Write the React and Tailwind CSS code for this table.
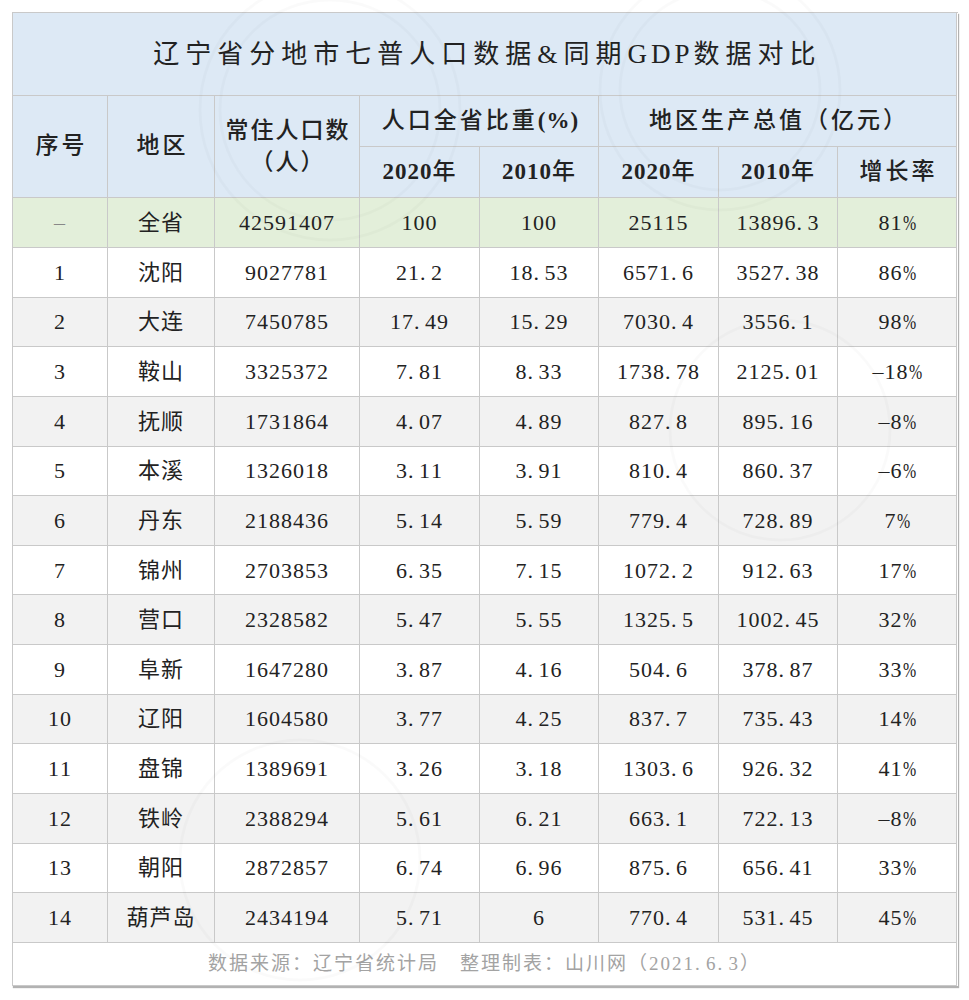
import React from "react";

const rows = [
  ["1", "沈阳", "9027781", "21.2", "18.53", "6571.6", "3527.38", "86%"],
  ["2", "大连", "7450785", "17.49", "15.29", "7030.4", "3556.1", "98%"],
  ["3", "鞍山", "3325372", "7.81", "8.33", "1738.78", "2125.01", "-18%"],
  ["4", "抚顺", "1731864", "4.07", "4.89", "827.8", "895.16", "-8%"],
  ["5", "本溪", "1326018", "3.11", "3.91", "810.4", "860.37", "-6%"],
  ["6", "丹东", "2188436", "5.14", "5.59", "779.4", "728.89", "7%"],
  ["7", "锦州", "2703853", "6.35", "7.15", "1072.2", "912.63", "17%"],
  ["8", "营口", "2328582", "5.47", "5.55", "1325.5", "1002.45", "32%"],
  ["9", "阜新", "1647280", "3.87", "4.16", "504.6", "378.87", "33%"],
  ["10", "辽阳", "1604580", "3.77", "4.25", "837.7", "735.43", "14%"],
  ["11", "盘锦", "1389691", "3.26", "3.18", "1303.6", "926.32", "41%"],
  ["12", "铁岭", "2388294", "5.61", "6.21", "663.1", "722.13", "-8%"],
  ["13", "朝阳", "2872857", "6.74", "6.96", "875.6", "656.41", "33%"],
  ["14", "葫芦岛", "2434194", "5.71", "6", "770.4", "531.45", "45%"],
];

const total = ["-", "全省", "42591407", "100", "100", "25115", "13896.3", "81%"];

function Fmt({ s }) {
  const out = [];
  [...s].forEach((c, i) => {
    if (c === ".") {
      out.push(
        <span key={i} className="inline-block w-[11px] text-left">.</span>
      );
    } else if (c === "%") {
      out.push(
        <span key={i} className="inline-block w-[13px] text-left">
          <span className="inline-block origin-left scale-x-[0.72]">%</span>
        </span>
      );
    } else if (c === "-") {
      out.push(<span key={i}>–</span>);
    } else {
      out.push(<span key={i}>{c}</span>);
    }
  });
  return <>{out}</>;
}

const cellBase =
  "flex items-center justify-center border-r border-b border-[#c9c9c9]";

function Watermark() {
  return (
    <svg
      className="pointer-events-none absolute left-0 top-0"
      width="969"
      height="1000"
      viewBox="0 0 969 1000"
    >
      <g fill="none" stroke="#000" strokeOpacity="0.018" strokeWidth="3">
        <circle cx="330" cy="110" r="130" />
        <circle cx="330" cy="110" r="110" />
        <circle cx="720" cy="90" r="120" />
        <circle cx="720" cy="90" r="100" />
        <circle cx="780" cy="430" r="110" />
        <circle cx="300" cy="860" r="120" />
      </g>
    </svg>
  );
}

export default function App() {
  return (
    <div
      className="relative h-[1000px] w-[969px] bg-white pl-[12px] pt-[12px] text-[#222]"
      style={{ fontFamily: '"Liberation Serif", "Noto Sans CJK SC", serif' }}
    >
      <div className="grid w-[946px] grid-cols-[95px_107px_145px_120px_119px_120px_119px_119px] grid-rows-[83px_51px_51px_50px_repeat(14,49.64px)_43px] border-l border-t border-[#c9c9c9] shadow-[1px_2px_1px_rgba(0,0,0,0.3)]">
        {/* Title */}
        <div
          className={`${cellBase} col-span-8 bg-[#dde9f5] text-[26px] tracking-[6px] pl-[6px]`}
        >
          辽宁省分地市七普人口数据&amp;同期
          <span className="text-[27px] tracking-[4px]">GDP</span>
          数据对比
        </div>

        {/* Header row 1 */}
        <div className={`${cellBase} row-span-2 bg-[#dde9f5] text-[23px] tracking-[3px] pl-[3px] font-medium`}>
          序号
        </div>
        <div className={`${cellBase} row-span-2 bg-[#dde9f5] text-[23px] tracking-[3px] pl-[3px] font-medium`}>
          地区
        </div>
        <div className={`${cellBase} row-span-2 flex-col bg-[#dde9f5] text-[23px] leading-[32px] tracking-[2px] pl-[2px] font-medium`}>
          <span>常住人口数</span>
          <span>（人）</span>
        </div>
        <div className={`${cellBase} col-span-2 bg-[#dde9f5] text-[23px] tracking-[3px] pl-[3px] font-medium`}>
          人口全省比重<span className="font-bold tracking-[1px]">(%)</span>
        </div>
        <div className={`${cellBase} col-span-3 bg-[#dde9f5] text-[23px] tracking-[3px] pl-[3px] font-medium`}>
          地区生产总值（亿元）
        </div>

        {/* Header row 2 */}
        {["2020", "2010", "2020", "2010"].map((h, i) => (
          <div
            key={i}
            className={`${cellBase} bg-[#dde9f5] text-[23px] tracking-[1px] font-medium`}
          >
            <span className="font-bold">{h}</span>年
          </div>
        ))}
        <div className={`${cellBase} bg-[#dde9f5] text-[23px] tracking-[3px] pl-[3px] font-medium`}>
          增长率
        </div>

        {/* Total row */}
        {total.map((v, i) => (
          <div
            key={i}
            className={`${cellBase} bg-[#e3efda] text-[22px] tracking-[1px] ${
              i === 0 ? "text-[#888]" : ""
            }`}
          >
            <Fmt s={v} />
          </div>
        ))}

        {/* Data rows */}
        {rows.map((r, ri) =>
          r.map((v, ci) => (
            <div
              key={`${ri}-${ci}`}
              className={`${cellBase} text-[22px] tracking-[1px] ${
                ri % 2 === 1 ? "bg-[#f2f2f2]" : "bg-white"
              }`}
            >
              <Fmt s={v} />
            </div>
          ))
        )}

        {/* Footer */}
        <div
          className={`${cellBase} col-span-8 bg-white text-[19px] tracking-[2px] text-[#a3a3a3]`}
        >
          数据来源：辽宁省统计局　整理制表：山川网（2021
          <span className="inline-block w-[11px] text-left">.</span>6
          <span className="inline-block w-[11px] text-left">.</span>3）
        </div>
      </div>
      <Watermark />
    </div>
  );
}
